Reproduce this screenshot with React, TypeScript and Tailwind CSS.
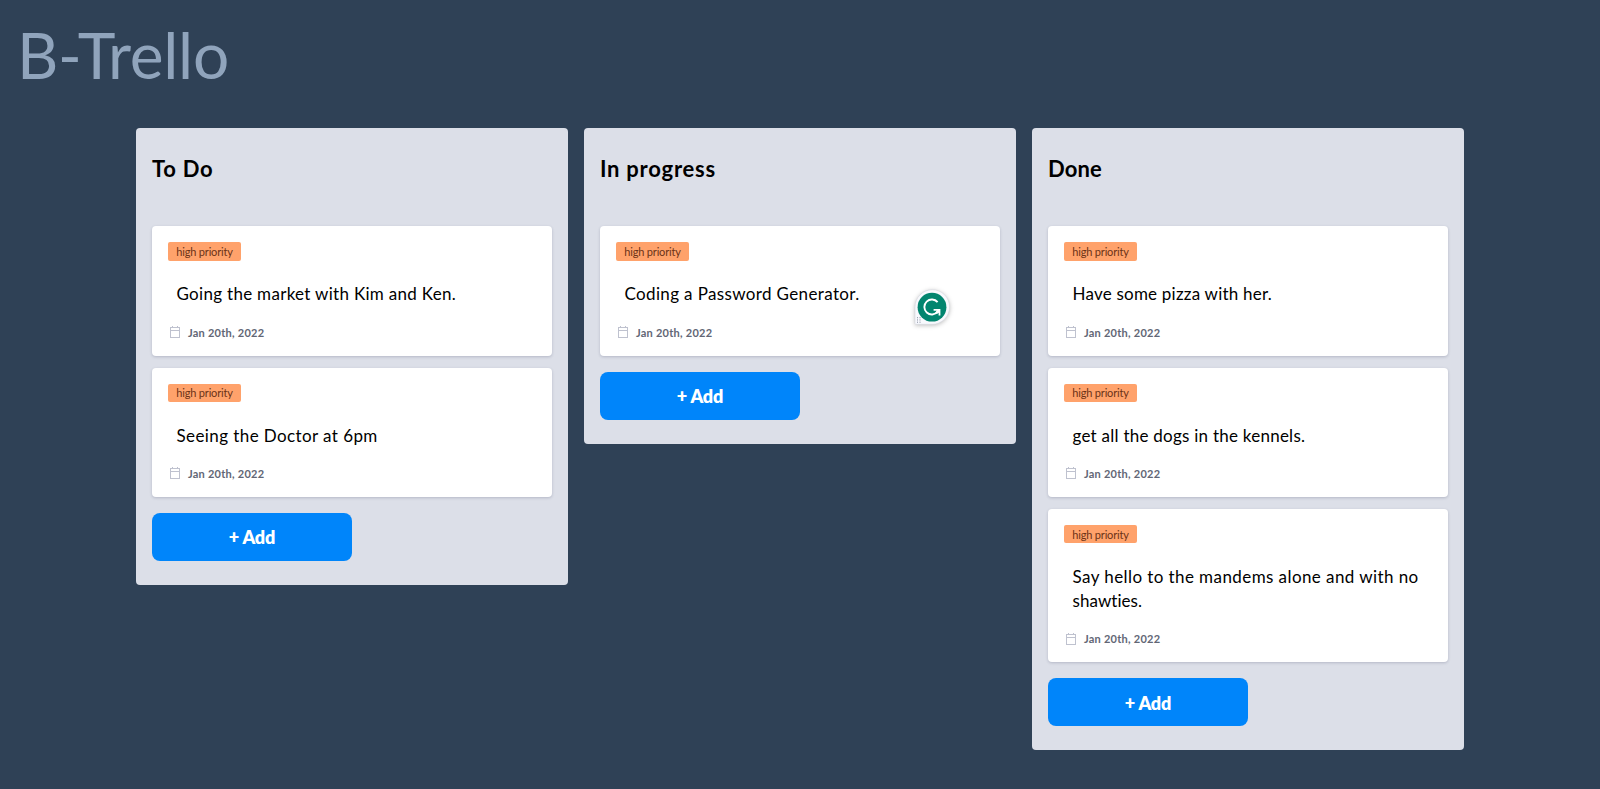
import React from "react";

type Task = { lines: { text: string; tracking: string }[] };
type Board = { title: string; tracking: string; tasks: Task[] };

const boards: Board[] = [
  {
    title: "To Do",
    tracking: "tracking-[0.75px]",
    tasks: [
      { lines: [{ text: "Going the market with Kim and Ken.", tracking: "tracking-[0.3px]" }] },
      { lines: [{ text: "Seeing the Doctor at 6pm", tracking: "tracking-[0.41px]" }] },
    ],
  },
  {
    title: "In progress",
    tracking: "tracking-[0.75px]",
    tasks: [{ lines: [{ text: "Coding a Password Generator.", tracking: "tracking-[0.36px]" }] }],
  },
  {
    title: "Done",
    tracking: "tracking-[0.13px]",
    tasks: [
      { lines: [{ text: "Have some pizza with her.", tracking: "tracking-[0.22px]" }] },
      { lines: [{ text: "get all the dogs in the kennels.", tracking: "tracking-[0.25px]" }] },
      {
        lines: [
          { text: "Say hello to the mandems alone and with no", tracking: "tracking-[0.42px]" },
          { text: "shawties.", tracking: "tracking-[0.05px]" },
        ],
      },
    ],
  },
];

function CalendarIcon() {
  return (
    <svg className="block h-3 w-3" viewBox="0 0 12 12" fill="none" stroke="#bfc2cf" shapeRendering="crispEdges">
      <path d="M1.5 1.5h9v10h-9zM1.5 4.5h9M3.5 0v2M8.5 0v2" />
    </svg>
  );
}

function GrammarBadge() {
  return (
    <svg className="absolute top-[57px] left-[309px] h-[46px] w-[46px] overflow-visible" viewBox="0 0 46 46">
      <path
        className="drop-shadow-[0_1px_2px_rgba(0,0,0,0.25)]"
        d="M6 40.5V24a17.3 17.3 0 1 1 17.3 17.3H7a1 1 0 0 1-1-.8z"
        fill="#f8f9fd"
        stroke="#d5d7df"
        strokeWidth="0.6"
      />
      <circle cx="23" cy="24.2" r="14.4" fill="#02856f" />
      <path d="M28.6 19.2a7.5 7.5 0 1 0 .1 9.5" fill="none" stroke="#fff" strokeWidth="1.9" />
      <path d="M24.6 26h6.8v6.6h-1.8v-2.8l-1.6 1.2-1.7-1.4 1.4-1.8h-3.1z" fill="#fff" />
      <path d="M8.5 34v6M11 34v6" stroke="#9da2b3" strokeWidth="1" strokeDasharray="1.3 1" />
    </svg>
  );
}

function Card({ task, badge }: { task: Task; badge: boolean }) {
  return (
    <article className="relative rounded bg-white p-4 shadow-[0_1px_3px_rgba(40,45,80,0.22)]">
      <span className="flex h-[18.4px] w-[73px] items-center justify-center rounded-xs bg-[#ffa26b] text-[11px] leading-none tracking-[-0.17px] text-[#6b3217]">
        high priority
      </span>
      <div className="mt-[21.6px] pl-[8.5px] text-[17px] leading-6 text-black">
        {task.lines.map((line) => (
          <p key={line.text} className={`whitespace-nowrap ${line.tracking}`}>
            {line.text}
          </p>
        ))}
      </div>
      <div className="mt-[18px] flex h-[15.3px] items-center gap-[7px] pl-px">
        <CalendarIcon />
        <time className="text-[11px] leading-none font-bold tracking-[0.25px] text-[#626675]">Jan 20th, 2022</time>
      </div>
      {badge && <GrammarBadge />}
    </article>
  );
}

export default function App() {
  return (
    <div className="h-[789px] overflow-hidden bg-[#2f4156] font-['Lato',sans-serif]">
      <h1 className="h-32 pt-[15px] pl-[17px] text-[64px] leading-[80px] tracking-[-0.3px] text-[#90a4bc]">B-Trello</h1>
      <main className="flex items-start gap-4 px-[136px]">
        {boards.map((board) => (
          <section key={board.title} className="w-[432px] rounded bg-[#dcdfe8] px-4 pb-6">
            <h2 className={`h-[98.4px] pt-[25px] text-[22px] leading-8 font-bold text-black ${board.tracking}`}>
              {board.title}
            </h2>
            <div className="flex flex-col gap-3">
              {board.tasks.map((task) => (
                <Card key={task.lines[0].text} task={task} badge={board.title === "In progress"} />
              ))}
            </div>
            <button className="mt-4 block h-12 w-[200px] rounded-lg bg-[#0085fa] pt-px text-lg font-extrabold tracking-[-0.2px] text-white">
              + Add
            </button>
          </section>
        ))}
      </main>
    </div>
  );
}
